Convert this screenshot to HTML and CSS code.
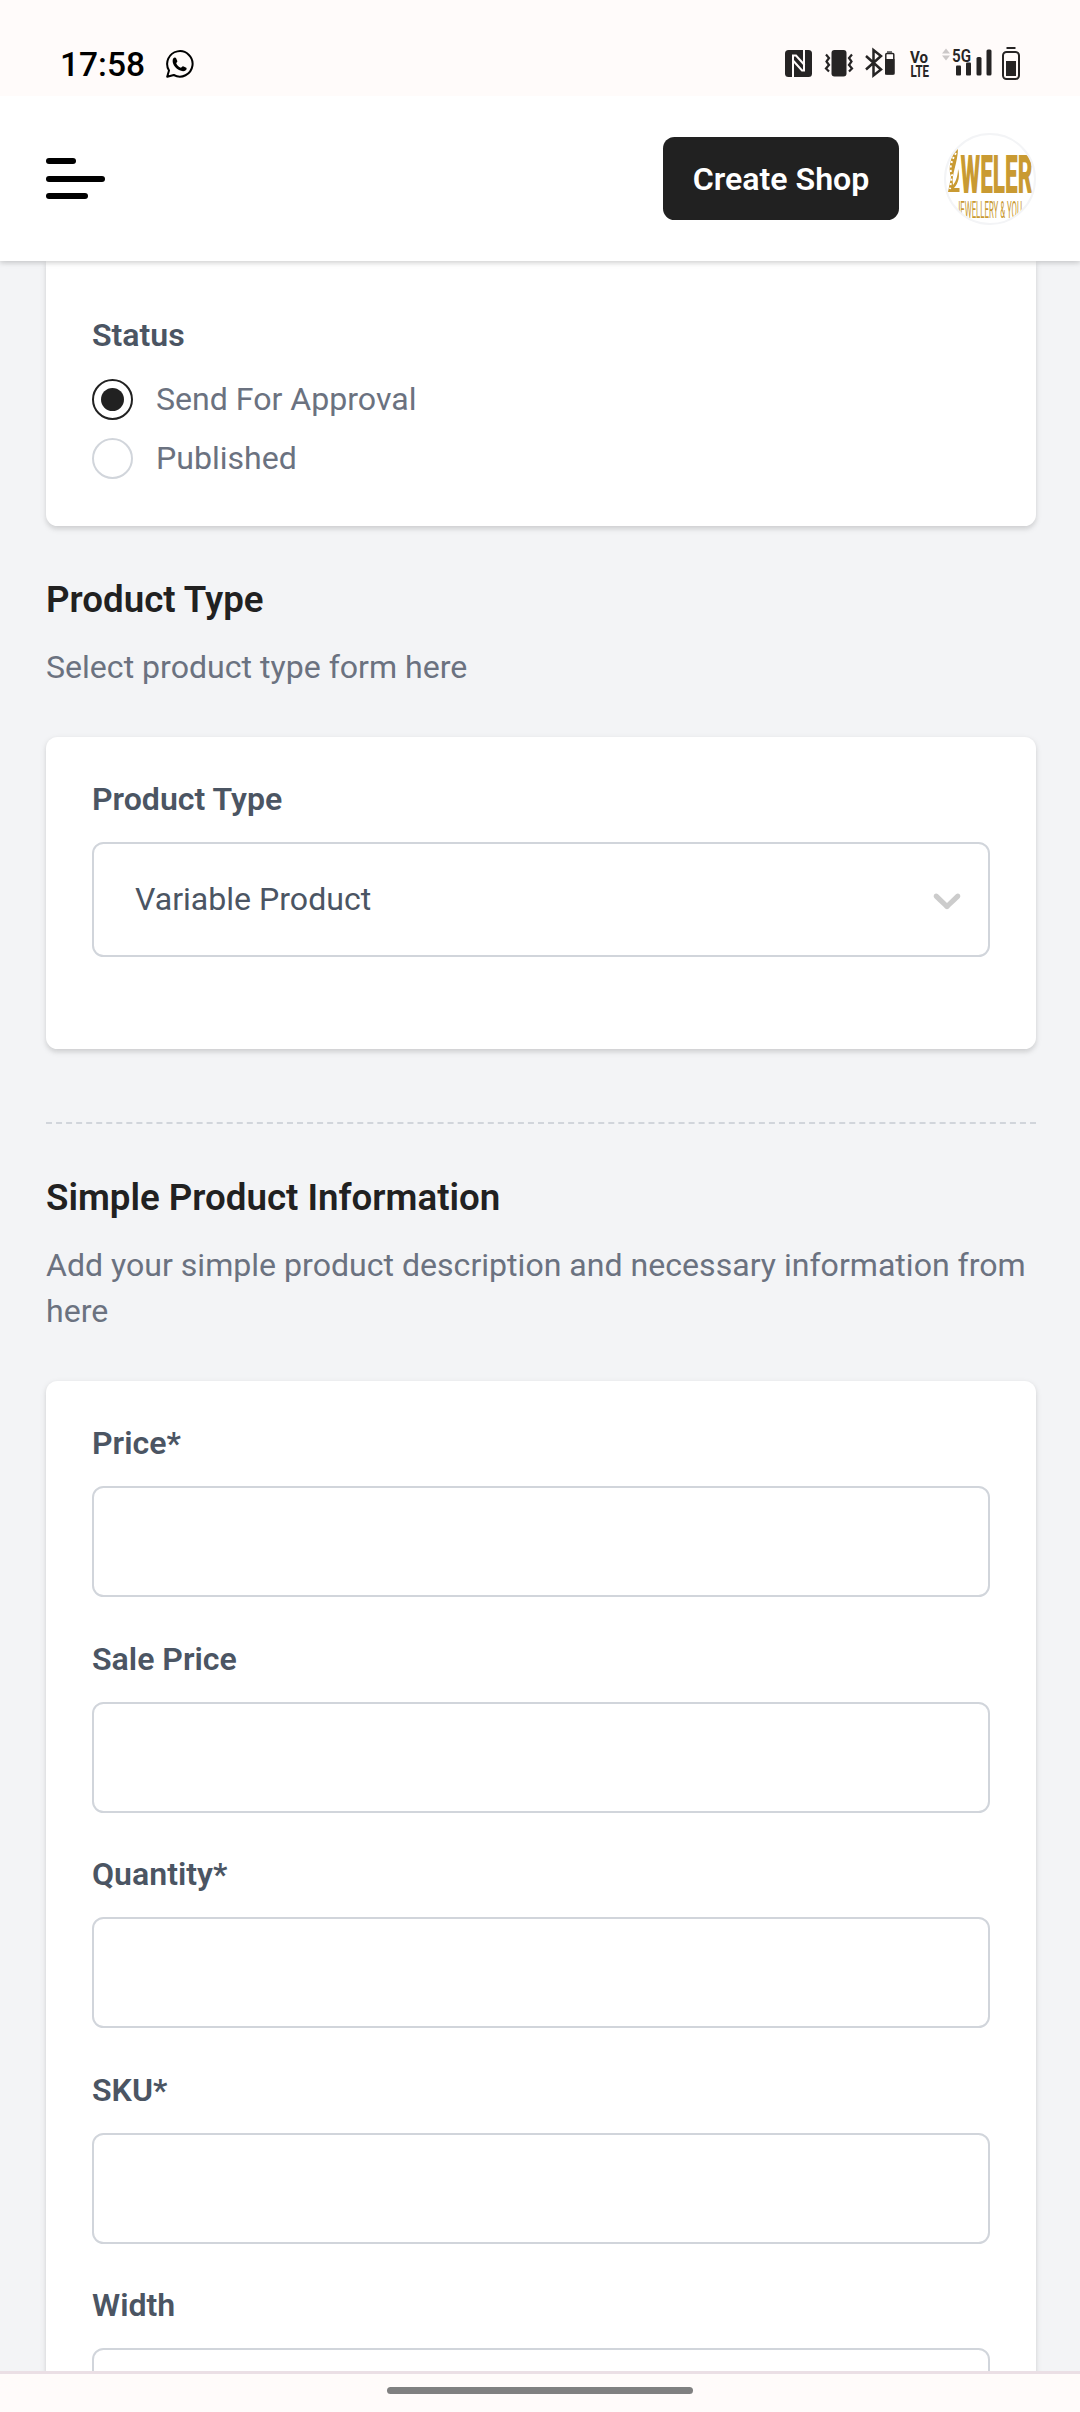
FILE: index.html
```html
<!DOCTYPE html>
<html lang="en">
<head>
<meta charset="utf-8">
<title>Create Product</title>
<link rel="stylesheet" href="styles.css">
</head>
<body>
<div class="screen">
  <div class="statusbar">
    <span class="clock">17:58</span>
    <svg class="whatsapp" width="28" height="28" viewBox="0 0 28 28" fill="none">
      <path d="M1.2 26.8 3 20.4A12.7 12.7 0 1 1 7.8 25Z" stroke="#000" stroke-width="2" stroke-linejoin="round"/>
      <path d="M7.2 8.600c.8-1.400 2.200-1.500 2.800-.6l1.300 3c.3.900-.9 1.700-1.100 2.300.9 2 2.500 3.500 4.600 4.500.7-.3 1.500-1.700 2.300-1.500l3.200 1.500c.6.500.3 1.800-.5 2.500-1.700 1.500-4.300 1.100-6.800-.2-3-1.700-5.200-4.400-6-6.900-.5-1.600-.5-3.400.2-4.600Z" fill="#000"/>
    </svg>
    <div class="indicators">
      <svg class="nfc" width="27" height="27" viewBox="0 0 27 27" fill="none">
        <rect width="27" height="27" rx="3.500" fill="#262424"/>
        <path d="M8 27V5.500h3L19.500 15" stroke="#fffbfa" stroke-width="2"/>
        <path d="M19 0V20.500h-2L8.500 11" stroke="#fffbfa" stroke-width="2"/>
      </svg>
      <svg class="vibrate" width="28" height="27" viewBox="0 0 28 27" fill="none" stroke="#262424" stroke-width="2.200">
        <rect x="6.500" y="0" width="15" height="26.500" rx="3" fill="#262424" stroke="none"/>
        <path d="M1 4.500 4 8 1.500 11.500 4 15 1 18.500 4 21.500M27 4.500 24 8 26.500 11.500 24 15 27 18.500 24 21.500"/>
      </svg>
      <svg class="bluetooth" width="30" height="30" viewBox="0 0 30 30" fill="none">
        <path d="m1 8 15 13.500-7.500 6V2l7.500 6L1 21.500" stroke="#262424" stroke-width="2.500"/>
        <path d="M22 3h5v2h-5z" fill="#777"/>
        <rect x="20.800" y="5.500" width="8" height="20.500" rx="1" stroke="#262424" stroke-width="1.500"/>
        <path d="M20 11h9.500v15.500H20z" fill="#262424"/>
      </svg>
      <svg class="volte" width="20" height="28" viewBox="0 0 20 28" fill="#262424">
        <text x="0" y="12.300" textLength="18" lengthAdjust="spacingAndGlyphs">Vo</text>
        <text x="0.500" y="26" textLength="18.500" lengthAdjust="spacingAndGlyphs">LTE</text>
      </svg>
      <svg class="signal" width="52" height="29" viewBox="0 0 52 29" fill="#262424">
        <path d="m1 6.500 4-5 4 5zM1 8.500h8l-4 5z" fill="#ccc8c8"/>
        <text x="11" y="14.500" textLength="19" lengthAdjust="spacingAndGlyphs">5G</text>
        <rect x="15" y="18.500" width="5" height="10" rx="1"/>
        <rect x="25" y="15.500" width="5" height="13" rx="1"/>
        <rect x="35.500" y="10" width="5" height="18.500" rx="1.500"/>
        <rect x="45.500" y="2.500" width="5" height="26" rx="1.500"/>
      </svg>
      <svg class="battery" width="18" height="33" viewBox="0 0 18 33" fill="none">
        <path d="M4.500 1h9" stroke="#262424" stroke-width="2"/>
        <rect x="1" y="5" width="16" height="27" rx="3.500" stroke="#262424" stroke-width="2"/>
        <path d="M4 14h10v15H4z" fill="#262424"/>
      </svg>
    </div>
  </div>

  <header class="topbar">
    <div class="menu"><span class="bar bar-short"></span><span class="bar bar-long"></span><span class="bar bar-mid"></span></div>
    <div class="actions">
      <div class="create">Create Shop</div>
      <div class="avatar">
        <svg width="88" height="88" viewBox="0 0 88 88" fill="#c99a32">
          <path d="M12 13C4 20 2 34 5 42L2 57H13.500V53H8C13 48 14 40 12 34C12 42 9 48 7 50C5 39 12 28 12 13Z"/>
          <path d="M10 18C5 26 3 34 6 40L4 54" fill="none" stroke="#fff" stroke-width="2" stroke-dasharray="2 2.500"/>
          <text class="brand" x="14.500" y="58" textLength="72" lengthAdjust="spacingAndGlyphs">WELER</text>
          <text class="tagline" x="10" y="83" textLength="66" lengthAdjust="spacingAndGlyphs">JEWELLERY &amp; YOU</text>
        </svg>
      </div>
    </div>
  </header>

  <main class="content">
    <section class="card card-status">
      <div class="label">Status</div>
      <div class="radios">
        <div class="option"><span class="radio checked"></span><span class="option-text">Send For Approval</span></div>
        <div class="option"><span class="radio"></span><span class="option-text">Published</span></div>
      </div>
    </section>

    <div class="intro">
      <h4 class="title">Product Type</h4>
      <p class="desc">Select product type form here</p>
    </div>
    <section class="card card-type">
      <div class="label">Product Type</div>
      <div class="select"><span class="option-text">Variable Product</span>
        <svg width="46" height="46" viewBox="0 0 20 20" fill="#ccc"><path d="M4.516 7.548c0.436-0.446 1.043-0.481 1.576 0l3.908 3.747 3.908-3.747c0.533-0.481 1.141-0.446 1.574 0 0.436 0.445 0.408 1.197 0 1.615-0.406 0.418-4.695 4.502-4.695 4.502-0.217 0.223-0.502 0.335-0.787 0.335s-0.570-0.112-0.789-0.335c0 0-4.287-4.084-4.695-4.502s-0.436-1.170 0-1.615z"/></svg>
      </div>
    </section>

    <div class="divider"></div>

    <div class="intro">
      <h4 class="title">Simple Product Information</h4>
      <p class="desc">Add your simple product description and necessary information from here</p>
    </div>
    <section class="card">
      <div class="field"><div class="label">Price*</div><div class="input"></div></div>
      <div class="field"><div class="label">Sale Price</div><div class="input"></div></div>
      <div class="field"><div class="label">Quantity*</div><div class="input"></div></div>
      <div class="field"><div class="label">SKU*</div><div class="input"></div></div>
      <div class="field"><div class="label">Width</div><div class="input"></div></div>
    </section>
  </main>

  <footer class="gesture"><div class="handle"></div></footer>
</div>
</body>
</html>
```
FILE: styles.css
```css
* { box-sizing: border-box; }
body { margin: 0; font-family: Roboto, "Liberation Sans", sans-serif; }
.screen {
  width: 1080px;
  height: 2412px;
  display: flex;
  flex-direction: column;
  overflow: hidden;
  background: #f3f4f6;
}

.statusbar {
  height: 96px;
  flex: none;
  position: relative;
  z-index: 2;
  display: flex;
  align-items: flex-start;
  padding: 0 60px;
  background: #fffbfa;
  color: #000;
}
.clock { width: 106px; margin-top: 45px; font-size: 33.5px; font-weight: 500; line-height: 40px; }
.whatsapp { margin-top: 50px; }
.indicators { display: flex; margin-left: auto; align-items: flex-start; padding-top: 47px; }
.indicators svg { overflow: visible; }
.nfc { margin: 3px 13px 0 0; }
.vibrate { margin: 3px 12px 0 0; }
.bluetooth { margin: 1px 15px 0 0; }
.volte { margin: 4px 13px 0 0; font-size: 16px; font-weight: 700; }
.signal { margin: 0 9px 0 -2px; font-size: 18px; font-weight: 600; }

.topbar {
  height: 165px;
  flex: none;
  position: relative;
  z-index: 1;
  display: flex;
  align-items: center;
  justify-content: space-between;
  padding: 0 44px 0 46px;
  background: #fff;
  box-shadow: 0 2.3px 6.9px rgba(0, 0, 0, .1), 0 2.3px 4.6px rgba(0, 0, 0, .1);
}
.menu { display: flex; flex-direction: column; gap: 11.5px; }
.bar { height: 6px; border-radius: 3px; background: #000; }
.bar-short { width: 29.5px; }
.bar-long { width: 59px; }
.bar-mid { width: 41.5px; }
.actions { display: flex; align-items: center; gap: 45px; }
.create {
  width: 236px;
  height: 83px;
  border-radius: 11.5px;
  background: #212121;
  color: #fff;
  font-size: 32.14px;
  font-weight: 600;
  line-height: 84px;
  text-align: center;
}
.avatar { width: 92px; height: 92px; border: 2px solid #f3f4f6; border-radius: 50%; overflow: hidden; background: #fff; }
.avatar svg { display: block; }
.brand { font-size: 54px; font-weight: 900; }
.tagline { font-size: 23px; font-weight: 400; }

.content { flex: 1; min-height: 0; overflow: hidden; padding: 0 44px 0 46px; }
.card {
  padding: 46px;
  border-radius: 11.5px;
  background: #fff;
  box-shadow: 0 2.3px 6.9px rgba(0, 0, 0, .1), 0 2.3px 4.6px rgba(0, 0, 0, .06);
}
.card-status { height: 265px; padding-top: 58px; border-radius: 0 0 11.5px 11.5px; }
.card-type { height: 312px; }
.label { margin-bottom: 27px; font-size: 32.1px; font-weight: 600; line-height: 32px; color: #4b5563; }
.radios { display: flex; flex-direction: column; gap: 18px; padding-top: 1px; }
.option { display: flex; align-items: center; gap: 23px; height: 41px; font-size: 32.1px; color: #6b7280; }
.option-text { padding-bottom: 2px; }
.radio { width: 41px; height: 41px; border: 2px solid #d1d5db; border-radius: 50%; display: grid; place-items: center; }
.radio.checked { border-color: #212121; }
.radio.checked::after { content: ""; width: 23px; height: 23px; border-radius: 50%; background: #212121; }

.intro { padding: 46px 0 47px; }
.title { margin: 0 0 17px; font-size: 36.7px; font-weight: 600; line-height: 55px; color: #212121; }
.desc { margin: 0; font-size: 32.1px; line-height: 46px; color: #6b7280; }
.select {
  height: 115px;
  display: flex;
  align-items: center;
  justify-content: space-between;
  padding: 0 18px 0 41px;
  border: 2px solid #d1d5db;
  border-radius: 11.5px;
  color: #4b5563;
  font-size: 32.1px;
}
.divider { margin-top: 73px; border-top: 2px dashed #d1d5db; }
.field { margin-bottom: 45.6px; }
.input { height: 111px; border: 2px solid #d1d5db; border-radius: 11.5px; }

.gesture { height: 41px; flex: none; display: flex; justify-content: center; padding-top: 13px; border-top: 3px solid #ebdfe5; background: #fffbfa; }
.handle { width: 306px; height: 7px; border-radius: 4px; background: #808080; }
```
